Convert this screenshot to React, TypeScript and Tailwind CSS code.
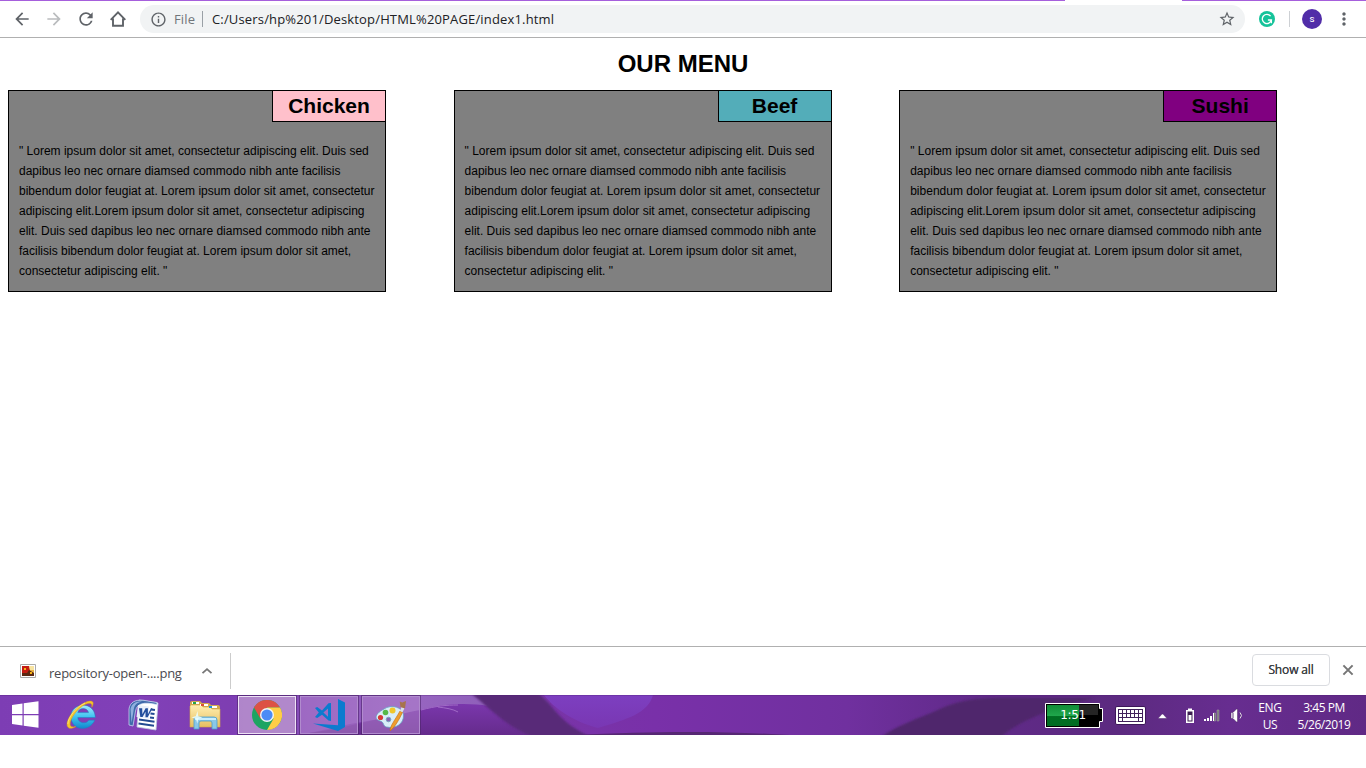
import React from "react";
import { MdArrowBack, MdArrowForward, MdRefresh, MdStarBorder, MdInfoOutline, MdMoreVert } from "react-icons/md";

const menu = [
  { name: "Chicken", color: "bg-[#ffc0cb]" },
  { name: "Beef", color: "bg-[#53adb9]" },
  { name: "Sushi", color: "bg-[#800080]" },
];

const lines = [
  '" Lorem ipsum dolor sit amet, consectetur adipiscing elit. Duis sed',
  "dapibus leo nec ornare diamsed commodo nibh ante facilisis",
  "bibendum dolor feugiat at. Lorem ipsum dolor sit amet, consectetur",
  "adipiscing elit.Lorem ipsum dolor sit amet, consectetur adipiscing",
  "elit. Duis sed dapibus leo nec ornare diamsed commodo nibh ante",
  "facilisis bibendum dolor feugiat at. Lorem ipsum dolor sit amet,",
  'consectetur adipiscing elit. "',
];

function Toolbar() {
  return (
    <header className="h-[38px] shrink-0 border-b border-[#b0b0b0] bg-white">
      <div className="flex h-px">
        <div className="w-[1065px] bg-[#a65fdc]" />
        <div className="w-[117px] bg-white" />
        <div className="flex-1 bg-[#a65fdc]" />
      </div>
      <div className="flex h-9 items-center">
        <div className="ml-[12px] flex gap-3 text-[20px] text-[#5f6368]">
          <MdArrowBack />
          <MdArrowForward className="text-[#babcbe]" />
          <MdRefresh />
          <svg width="20" height="20" viewBox="0 0 20 20" fill="none" stroke="currentColor" strokeWidth="1.9">
            <path d="M2.7 10.8 10 3.4l7.3 7.4M5 9.5v7.2h10V9.5" />
          </svg>
        </div>
        <div className="ml-[12px] flex h-7 w-[1105px] items-center rounded-full bg-[#f1f3f4] text-[13px]">
          <MdInfoOutline className="ml-[10px] text-[17px] text-[#5f6368]" />
          <span className="ml-[7px] w-[28px] pt-px font-['Open_Sans',sans-serif] tracking-[0.15px] text-[#70757a]">File</span>
          <div className="h-4 w-px bg-[#9aa0a6]" />
          <span className="ml-[9px] flex-1 whitespace-nowrap pt-px font-['Open_Sans',sans-serif] tracking-[0.16px] text-[#202124]">
            C:/Users/hp%201/Desktop/HTML%20PAGE/index1.html
          </span>
          <MdStarBorder className="mr-[9px] text-[18px] text-[#5f6368]" />
        </div>
        <svg className="ml-[14px]" width="16" height="16" viewBox="0 0 16 16">
          <circle cx="8" cy="8" r="8" fill="#15c39a" />
          <path d="M11.6 5.2A4.6 4.6 0 1 0 12.4 9H8.9M12.4 9v3.2" fill="none" stroke="#fff" strokeWidth="1.3" />
        </svg>
        <div className="ml-[14px] h-4 w-px bg-[#cdd0d4]" />
        <div className="ml-[12px] flex size-5 items-center justify-center rounded-full bg-[#512da8] pt-px font-['Roboto',sans-serif] text-[8px] font-medium text-white">
          S
        </div>
        <MdMoreVert className="ml-[12px] text-[20px] text-[#5f6368]" />
      </div>
    </header>
  );
}

function Card({ name, color }: { name: string; color: string }) {
  return (
    <section className="h-[202px] w-[378px] border border-black bg-[#808080]">
      <div className="flex justify-end">
        <h2 className={`-mt-px -mr-px h-8 w-[114px] border border-black text-center text-[21px] leading-[30px] font-bold ${color}`}>
          {name}
        </h2>
      </div>
      <div className="ml-[10px] pt-[19px] text-[12px] leading-5">
        {lines.map((l) => (
          <p key={l} className="whitespace-nowrap">{l}</p>
        ))}
      </div>
    </section>
  );
}

function DownloadBar() {
  return (
    <div className="flex h-[49px] shrink-0 items-center border-t border-[#b0b0b0] bg-white font-['Open_Sans',sans-serif]">
      <svg className="ml-5 -mt-px" width="16" height="14" viewBox="0 0 16 14">
        <path d="M.5.5h15v13H.5z" fill="#fff" stroke="#aaa" />
        <path d="M2 2h12v10H2z" fill="#e8b040" />
        <path d="M2 2h7l1 5-4 3-4-1z" fill="#c51c12" />
        <path d="M9 2h5v4h-4z" fill="#f7e3a0" />
        <path d="M2 9h5l2-3 5 3v3H2z" fill="#5b2812" />
        <path d="M4 4h2v2H4zM10 8h2v2h-2z" fill="#f5b515" />
      </svg>
      <span className="ml-[13px] mt-[5px] w-[152px] whitespace-nowrap text-[13px] tracking-[-0.24px] text-[#4a4a50]">repository-open-....png</span>
      <svg width="12" height="8" viewBox="0 0 12 8" fill="none" stroke="#777" strokeWidth="1.8">
        <path d="m1.5 6.2 4.5-4 4.5 4" />
      </svg>
      <div className="ml-[17px] h-9 w-px bg-[#ccc]" />
      <div className="-mt-[2px] mr-3 ml-auto flex h-8 w-[78px] items-center justify-center rounded border border-[#dadce0] text-[12px] tracking-[-0.15px] text-[#3c4043] [text-shadow:0_0_0.5px_#3c4043]">
        Show all
      </div>
      <svg className="-mt-[2px] mr-[12px]" width="12" height="12" viewBox="0 0 12 12" stroke="#757575" strokeWidth="2">
        <path d="m1.4 1.4 9.2 9.2m0-9.2-9.2 9.2" />
      </svg>
    </div>
  );
}

function TaskbarBackdrop() {
  return (
    <svg className="absolute inset-0" width="1366" height="40" viewBox="0 0 1366 40">
      <defs>
        <linearGradient id="base">
          <stop offset="0" stopColor="#7d3db4" />
          <stop offset=".1" stopColor="#8140b8" />
          <stop offset=".3" stopColor="#783aa5" />
          <stop offset=".48" stopColor="#7930a9" />
          <stop offset=".62" stopColor="#70309f" />
          <stop offset=".72" stopColor="#602a88" />
          <stop offset=".82" stopColor="#5c2a80" />
          <stop offset=".9" stopColor="#672d90" />
          <stop offset="1" stopColor="#602985" />
        </linearGradient>
        <linearGradient id="wave" x2="0" y2="1">
          <stop offset="0" stopColor="#7a37ac" />
          <stop offset="1" stopColor="#652b8c" />
        </linearGradient>
        <linearGradient id="glow" x2="0" y2="1">
          <stop offset="0" stopColor="#7d3fc0" />
          <stop offset="1" stopColor="#7937b3" />
        </linearGradient>
        <linearGradient id="mist">
          <stop offset="0" stopColor="#7d3db4" />
          <stop offset=".7" stopColor="#9765c0" />
          <stop offset="1" stopColor="#8e5fb9" />
        </linearGradient>
        <filter id="soft"><feGaussianBlur stdDeviation="1.2" /></filter>
      </defs>
      <path d="M0 0h1366v40H0z" fill="url(#base)" />
      <path d="M230 0h250l15 12-75 5-70 12-50 11h-70z" fill="url(#mist)" />
      <path d="M290 40c50-4 95-19 130-25 25-7 50-7 68-4 20 5 35 15 57 29z" fill="url(#wave)" />
      <path d="M421 15c15-4 25-5 37-5M438 12c8 1 15 2 20 5" fill="none" stroke="#a16bc7" />
      <path d="M473-3h63c18 12 20 28 51 43v3h-50c-28-9-42-25-64-43z" fill="#582b78" filter="url(#soft)" />
      <path d="M544 0h109c-5 18-25 24-55 33-25-6-45-21-54-33z" fill="url(#glow)" />
      <path d="M575 40c80-4 150-4 215 0z" fill="#562773" />
      <path d="M880 43c15-12 35-18 60-29 35-16 58-10 155-11-45 10-80 25-95 40z" fill="#50286c" filter="url(#soft)" />
      <path d="M0 .5h1366" stroke="#4d1c73" strokeOpacity=".3" />
    </svg>
  );
}

function WindowsLogo() {
  return (
    <svg width="28" height="28" viewBox="0 0 28 28" fill="#fff">
      <path d="m1 4 10.5-1.5V13H1zM12.7 2.3 27.5.3V13H12.7zM1 14.3h10.5v10.3L1 23.1zM12.7 14.3h14.8v12.5l-14.8-2z" />
    </svg>
  );
}

function ExplorerE() {
  return (
    <svg width="32" height="32" viewBox="0 0 32 32">
      <defs>
        <linearGradient id="ie" x2="0" y2="1"><stop stopColor="#a5ecfc" /><stop offset=".5" stopColor="#3fc3f0" /><stop offset="1" stopColor="#1188ce" /></linearGradient>
      </defs>
      <path d="M30.3 18.5H12.8c.2 6 8.7 6.8 11 2.7h5.9C24.5 33.5 6 31.8 5.8 17.2 6 3.5 29.6 1 30.3 18.5zM12.8 13.6h10.7c-.8-5.4-9.9-5.4-10.7 0z" fill="url(#ie)" fillRule="evenodd" stroke="#1b83c1" strokeWidth=".5" />
      <path d="M26.8 8.2C30.2 2.5 27 .5 20 3.5 10 8 1.5 19.5 2 26c.6 4.4 5.1 4 8.8 1.6-3 .6-5.4.4-5.7-2.2C4.7 20 12.5 9 20.5 5.3c5.2-2.2 7-.8 6.3 2.9z" fill="#f5c52e" stroke="#d9a017" strokeWidth=".5" />
      <path d="M20 4C11 8 3 18.5 2.8 25" fill="none" stroke="#ffe987" strokeWidth=".8" />
    </svg>
  );
}

function WordIcon() {
  return (
    <svg width="32" height="32" viewBox="0 0 32 32">
      <path d="m12 1 19 3-2 27-19-3z" fill="#fff" stroke="#bac8df" strokeWidth=".8" />
      <path d="M2 10C3 3 8 .8 16 1.2L30 3.5l-.2 2C17 2.8 10 4 8.5 12L6 27l-4-1z" fill="#3f69ab" stroke="#d6e4f8" strokeWidth=".7" />
      <path d="M3.5 10C5 4 9 2.5 15 2.6 8 4 7 8 6.5 12L4.5 24z" fill="#8fb0de" />
      <path d="m11 6 11 1.5v12L9.5 18z" fill="#e8effb" />
      <path d="M24 10.5 28 11M23.5 14.5l4 .5M23 18.5l4 .5M12 20.5l15.5 2.2M11.5 24.5l15.5 2.2" stroke="#234b92" strokeWidth="2" />
      <path d="M12 9.2h3.2l.2 6 3.2-6h2.3v6l3-6h1.6l-4.8 9h-2.2v-5.5L15.6 18h-2.3z" fill="#234f9d" />
    </svg>
  );
}

function FolderIcon() {
  return (
    <svg width="34" height="32" viewBox="0 0 34 32">
      <defs><linearGradient id="folder" x2="0" y2="1"><stop stopColor="#fff0b2" /><stop offset="1" stopColor="#e7be61" /></linearGradient></defs>
      <path d="M2 4q0-2 2-2h8l2 2h7l2 2h7q2 0 2 2v19H2z" fill="#d2a94d" />
      <path d="M3 6h10l2 2h7l2 2h8v18H2V7z" fill="url(#folder)" stroke="#d4a947" strokeWidth=".6" />
      <path d="M4 3h7v2H4zM12 5h8v2h-8zM21 7h8v2h-8z" fill="#fff" />
      <path d="M5 3h3v2H5z" fill="#23a54d" /><path d="M13 5h3v2h-3z" fill="#da4d35" /><path d="M21 7h3v2h-3z" fill="#1697df" />
      <path d="M6 30V20q0-2 2-2h18q3 0 3 3v9h-5v-6q0-2-2-2h-9q-2 0-2 2v6z" fill="#8ac8e8" stroke="#4d9fcb" strokeWidth=".8" />
      <path d="M7 20h21" stroke="#c9efff" strokeWidth="2" />
      <path d="m9.5 12 .8 5.2 4.2 1.3-4.2 1.2-1 5-1.4-5-4.4-1.2 4.4-1.4z" fill="#eaffff" opacity=".85" />
    </svg>
  );
}

function ChromeIcon() {
  return (
    <svg width="30" height="30" viewBox="0 0 30 30">
      <circle cx="15" cy="15" r="15" fill="#1da462" />
      <path d="M15 15 8.5 18.7 2 7.5A15 15 0 0 1 28 7.5H15z" fill="#dd5144" />
      <path d="M15 7.5h13A15 15 0 0 1 15 30l6.5-11.3z" fill="#ffcd46" />
      <circle cx="15" cy="15" r="7" fill="#f4f4f4" />
      <circle cx="15" cy="15" r="5.6" fill="#4c8bf5" />
    </svg>
  );
}

function CodeIcon() {
  return (
    <svg width="34" height="34" viewBox="0 0 34 34" fill="#0b7bcf">
      <path d="m26 1 7 3.5V29l-7 4L1 25.6l25 1.6z" />
      <path fillRule="evenodd" d="m3 10 2.2-1 4.8 3.6 6.5-7.3L19 5v18l-2.5-.5L10 16.8 5.2 20 3 19l3.8-4.4zM16 10.4l-4.6 4.2 4.6 4.2z" />
    </svg>
  );
}

function PaintIcon() {
  return (
    <svg width="32" height="32" viewBox="0 0 32 32">
      <path d="M9 10C16 5 28 8 28.500 16c.5 9-8 14-17 12-4-1-2-5-6.500-6C-2 20 1 14 9 10z" fill="#d9edf8" stroke="#649ac0" strokeWidth=".8" />
      <circle cx="13.500" cy="20.500" r="2.300" fill="#8665b0" stroke="#7ba4c2" />
      <circle cx="5.500" cy="18.500" r="2.600" fill="#d83a38" /><circle cx="10.500" cy="13.500" r="2.800" fill="#55b948" /><circle cx="17.500" cy="11.500" r="3" fill="#f0c62b" />
      <path d="M15 32c0-5 5-11 10-20l2.500 1.200C24 21 20 28 15 32z" fill="#ee9d2d" stroke="#c16d17" strokeWidth=".6" />
      <path d="m25 12 1.500-4 3 1.200-2 4z" fill="#d9e1e8" /><path d="m25.500 8-.8-5.500 2.600 1L31 2l-1 7.500z" fill="#a7744b" />
    </svg>
  );
}

function BatteryMeter() {
  return (
    <div className="relative ml-auto h-[25px] w-[58px]">
      <svg width="58" height="25" viewBox="0 0 58 25">
        <defs><linearGradient id="charge" x2="0" y2="1"><stop stopColor="#108c37" /><stop offset=".5" stopColor="#20a64b" /><stop offset=".55" stopColor="#006e22" /><stop offset="1" stopColor="#006c22" /></linearGradient></defs>
        <path d="M.5.5h54v5h3v13h-3v6H.5z" fill="#000" stroke="#fff" />
        <path d="M2 2h32v21H2z" fill="url(#charge)" /><path d="M34 2h19v10H34z" fill="#252525" />
      </svg>
      <span className="absolute inset-0 pr-[2px] text-center font-['DejaVu_Sans',sans-serif] text-[12px] leading-[25px] tracking-[-0.3px] text-white">1:51</span>
    </div>
  );
}

const keys = [0, 1, 2, 3, 4, 5];

function Tray() {
  return (
    <div className="ml-auto flex h-10 items-center font-['Open_Sans',sans-serif] text-white">
      <BatteryMeter />
      <svg className="ml-[12px]" width="31" height="19" viewBox="0 0 31 19">
        <rect x=".5" y=".5" width="30" height="18" rx="1.5" fill="#fff" stroke="#3c1759" />
        <path d="M3 3h25v13H3z" fill="#41215b" />
        {keys.map((k) => <path key={k} d={`M${4 + k * 4} 4h3v3h-3zm0 4h3v3h-3z`} fill="#fff" />)}
        <path d="M4 12h3v3H4zm4 0h15v3H8zm16 0h3v3h-3z" fill="#fff" />
      </svg>
      <svg className="ml-[12px] mt-px" width="9" height="6" viewBox="0 0 9 6"><path d="m0 5.500 4-4.500h1l4 4.500z" fill="#fff" stroke="#4d246b" strokeWidth=".5" /></svg>
      <svg className="ml-[18px] mt-px" width="10" height="16" viewBox="0 0 10 16">
        <path d="M3 .5h4V2h2v13H1V2h2z" fill="#fff" /><path d="M2.500 3.500h5v10h-5z" fill="#3d2050" /><path d="M3.500 7h3v5.500h-3z" fill="#fff" />
      </svg>
      <svg className="ml-[9px] mt-px" width="16" height="13" viewBox="0 0 16 13">
        <path d="M0 10h2v2H0zm3-1h2v3H3zm3-2h2v5H6z" fill="#fff" />
        <path d="M9.500 4h2v8h-2zm3.500-3h2v11h-2z" fill="#777" stroke="#aaa" strokeWidth=".5" />
        <path d="M9 4h1v8H9z" fill="#fff" />
      </svg>
      <svg className="ml-[10px] mt-px" width="14" height="15" viewBox="0 0 14 15">
        <path d="M1 4.500h2L6.500 1h1v13h-1L3 10.500H1z" fill="#fff" stroke="#4c2666" strokeWidth=".5" />
        <path d="M3 5v5" stroke="#65427b" /><path d="M10 4.500q3 3 0 6" fill="none" stroke="#ddd" />
      </svg>
      <div className="ml-[10px] w-[32px] pt-px text-center text-[12px] leading-[17px] tracking-[-0.3px]">ENG<br />US</div>
      <div className="ml-[8px] mr-[12px] w-[60px] whitespace-nowrap pt-px text-center text-[12px] leading-[17px] tracking-[-0.45px]">3:45 PM<br />5/26/2019</div>
    </div>
  );
}

function Taskbar() {
  return (
    <footer className="relative h-10 shrink-0 overflow-hidden">
      <TaskbarBackdrop />
      <div className="relative flex h-10 items-center">
        <div className="ml-[11px]"><WindowsLogo /></div>
        <div className="ml-[26px]"><ExplorerE /></div>
        <div className="ml-[30px]"><WordIcon /></div>
        <div className="ml-[29px]"><FolderIcon /></div>
        <div className="ml-[16px] flex gap-1">
          <div className="flex h-[38px] w-[58px] items-center justify-center border border-[#eee1f5] bg-[#c09dd2]/75 outline outline-[#4d246b]/60"><ChromeIcon /></div>
          <div className="flex h-[38px] w-[58px] items-center justify-center border border-[#b18bce] bg-[#b386cd]/50 outline outline-[#4d246b]/60"><CodeIcon /></div>
          <div className="flex h-[38px] w-[58px] items-center justify-center border border-[#b18bce] bg-[#b386cd]/50 outline outline-[#4d246b]/60"><PaintIcon /></div>
        </div>
        <Tray />
      </div>
    </footer>
  );
}

export default function App() {
  return (
    <div className="flex h-[768px] w-[1366px] flex-col overflow-hidden bg-white font-['Liberation_Sans',sans-serif] text-black">
      <Toolbar />
      <main className="flex-1">
        <h1 className="pt-[12px] text-center text-[24px] leading-[28px] font-bold">OUR MENU</h1>
        <div className="mt-[12px] ml-2 flex gap-[67.6px]">
          {menu.map((m) => <Card key={m.name} {...m} />)}
        </div>
      </main>
      <DownloadBar />
      <Taskbar />
      <div className="h-[33px] shrink-0" />
    </div>
  );
}
